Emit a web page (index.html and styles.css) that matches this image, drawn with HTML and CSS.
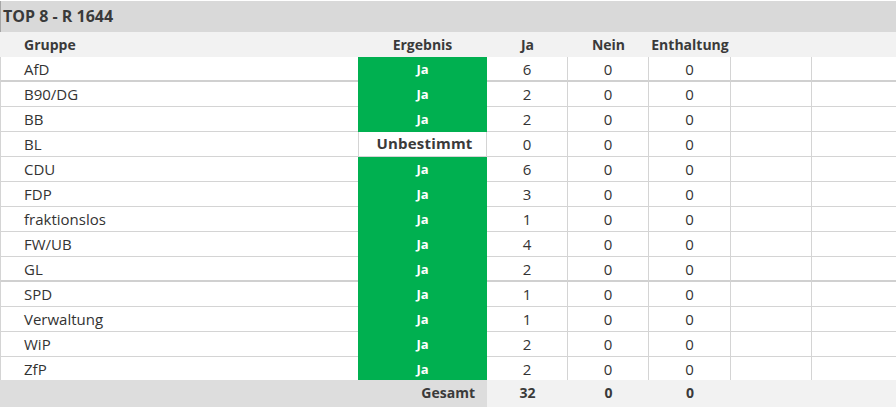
FILE: index.html
```html
<!DOCTYPE html>
<html lang="de">
<head>
<meta charset="utf-8">
<title>TOP 8 - R 1644</title>
<link rel="stylesheet" href="styles.css">
</head>
<body>
<div class="sheet">
  <div class="title">TOP 8 - R 1644</div>
  <div class="row head">
    <div class="c grp">Gruppe</div>
    <div class="c res">Ergebnis</div>
    <div class="c num">Ja</div>
    <div class="c num">Nein</div>
    <div class="c num">Enthaltung</div>
    <div class="c"></div>
    <div class="c"></div>
  </div>
  <div class="row data thick"><div class="c grp">AfD</div><div class="c res ja">Ja</div><div class="c num v">6</div><div class="c num v">0</div><div class="c num v">0</div><div class="c v"></div><div class="c last"></div></div>
  <div class="row data"><div class="c grp">B90/DG</div><div class="c res ja">Ja</div><div class="c num v">2</div><div class="c num v">0</div><div class="c num v">0</div><div class="c v"></div><div class="c last"></div></div>
  <div class="row data"><div class="c grp">BB</div><div class="c res ja">Ja</div><div class="c num v">2</div><div class="c num v">0</div><div class="c num v">0</div><div class="c v"></div><div class="c last"></div></div>
  <div class="row data"><div class="c grp">BL</div><div class="c res unb">Unbestimmt</div><div class="c num v">0</div><div class="c num v">0</div><div class="c num v">0</div><div class="c v"></div><div class="c last"></div></div>
  <div class="row data"><div class="c grp">CDU</div><div class="c res ja">Ja</div><div class="c num v">6</div><div class="c num v">0</div><div class="c num v">0</div><div class="c v"></div><div class="c last"></div></div>
  <div class="row data"><div class="c grp">FDP</div><div class="c res ja">Ja</div><div class="c num v">3</div><div class="c num v">0</div><div class="c num v">0</div><div class="c v"></div><div class="c last"></div></div>
  <div class="row data"><div class="c grp">fraktionslos</div><div class="c res ja">Ja</div><div class="c num v">1</div><div class="c num v">0</div><div class="c num v">0</div><div class="c v"></div><div class="c last"></div></div>
  <div class="row data"><div class="c grp">FW/UB</div><div class="c res ja">Ja</div><div class="c num v">4</div><div class="c num v">0</div><div class="c num v">0</div><div class="c v"></div><div class="c last"></div></div>
  <div class="row data thick"><div class="c grp">GL</div><div class="c res ja">Ja</div><div class="c num v">2</div><div class="c num v">0</div><div class="c num v">0</div><div class="c v"></div><div class="c last"></div></div>
  <div class="row data"><div class="c grp">SPD</div><div class="c res ja">Ja</div><div class="c num v">1</div><div class="c num v">0</div><div class="c num v">0</div><div class="c v"></div><div class="c last"></div></div>
  <div class="row data"><div class="c grp">Verwaltung</div><div class="c res ja">Ja</div><div class="c num v">1</div><div class="c num v">0</div><div class="c num v">0</div><div class="c v"></div><div class="c last"></div></div>
  <div class="row data"><div class="c grp">WiP</div><div class="c res ja">Ja</div><div class="c num v">2</div><div class="c num v">0</div><div class="c num v">0</div><div class="c v"></div><div class="c last"></div></div>
  <div class="row data short"><div class="c grp">ZfP</div><div class="c res ja">Ja</div><div class="c num v">2</div><div class="c num v">0</div><div class="c num v">0</div><div class="c v"></div><div class="c last"></div></div>
  <div class="row foot">
    <div class="c total-label">Gesamt</div>
    <div class="c num">32</div>
    <div class="c num">0</div>
    <div class="c num">0</div>
    <div class="c"></div>
    <div class="c"></div>
  </div>
</div>
</body>
</html>
```

FILE: styles.css
```css
html, body {
  margin: 0;
  padding: 0;
  background: #ffffff;
}

body {
  font-family: "Open Sans", "Liberation Sans", sans-serif;
  font-size: 14px;
  color: #333333;
  width: 896px;
  height: 407px;
  overflow: hidden;
}

.sheet {
  padding-top: 1px;
}

.title {
  height: 31px;
  box-sizing: border-box;
  background: #d9d9d9;
  border-left: 1px solid #a6a6a6;
  padding-left: 2px;
  font-weight: 700;
  font-size: 16px;
  line-height: 31px;
  color: #3a3a3a;
}

.row {
  display: grid;
  grid-template-columns: 358px 129px 81px 81px 82px 81px 84px;
  box-sizing: border-box;
}

.c {
  box-sizing: border-box;
  white-space: nowrap;
  overflow: hidden;
}

.head {
  height: 25px;
  background: #f2f2f2;
  font-weight: 700;
  line-height: 25px;
  color: #3a3a3a;
}

.head .grp {
  padding-left: 24px;
}

.num, .res {
  text-align: center;
}

.data {
  height: 25px;
  line-height: 24px;
  font-size: 15px;
}

.data.short {
  height: 23px;
}

.data .c {
  border-bottom: 1px solid #d4d4d4;
}

.data.thick .c {
  border-bottom: 2px solid #d0d0d0;
}

.data.short .c {
  border-bottom: none;
}

.data .grp {
  padding-left: 23px;
  border-left: 1px solid #d4d4d4;
}

.data .v {
  border-right: 1px solid #d4d4d4;
}

.data .res.ja,
.data.thick .res.ja {
  background: #00b050;
  color: #ffffff;
  font-weight: 700;
  font-size: 13px;
  border-bottom: none;
}

.data .res.unb {
  background: #ffffff;
  color: #3a3a3a;
  font-weight: 700;
  font-size: 15px;
  letter-spacing: 0.2px;
  padding-left: 4px;
  border: 1px solid #d4d4d4;
  border-top: none;
  line-height: 23px;
}

.foot {
  height: 27px;
  grid-template-columns: 487px 81px 81px 82px 81px 84px;
  background: #f2f2f2;
  font-weight: 700;
  line-height: 26px;
  color: #3a3a3a;
}

.foot .total-label {
  background: #dddddd;
  text-align: right;
  padding-right: 12px;
}
```
